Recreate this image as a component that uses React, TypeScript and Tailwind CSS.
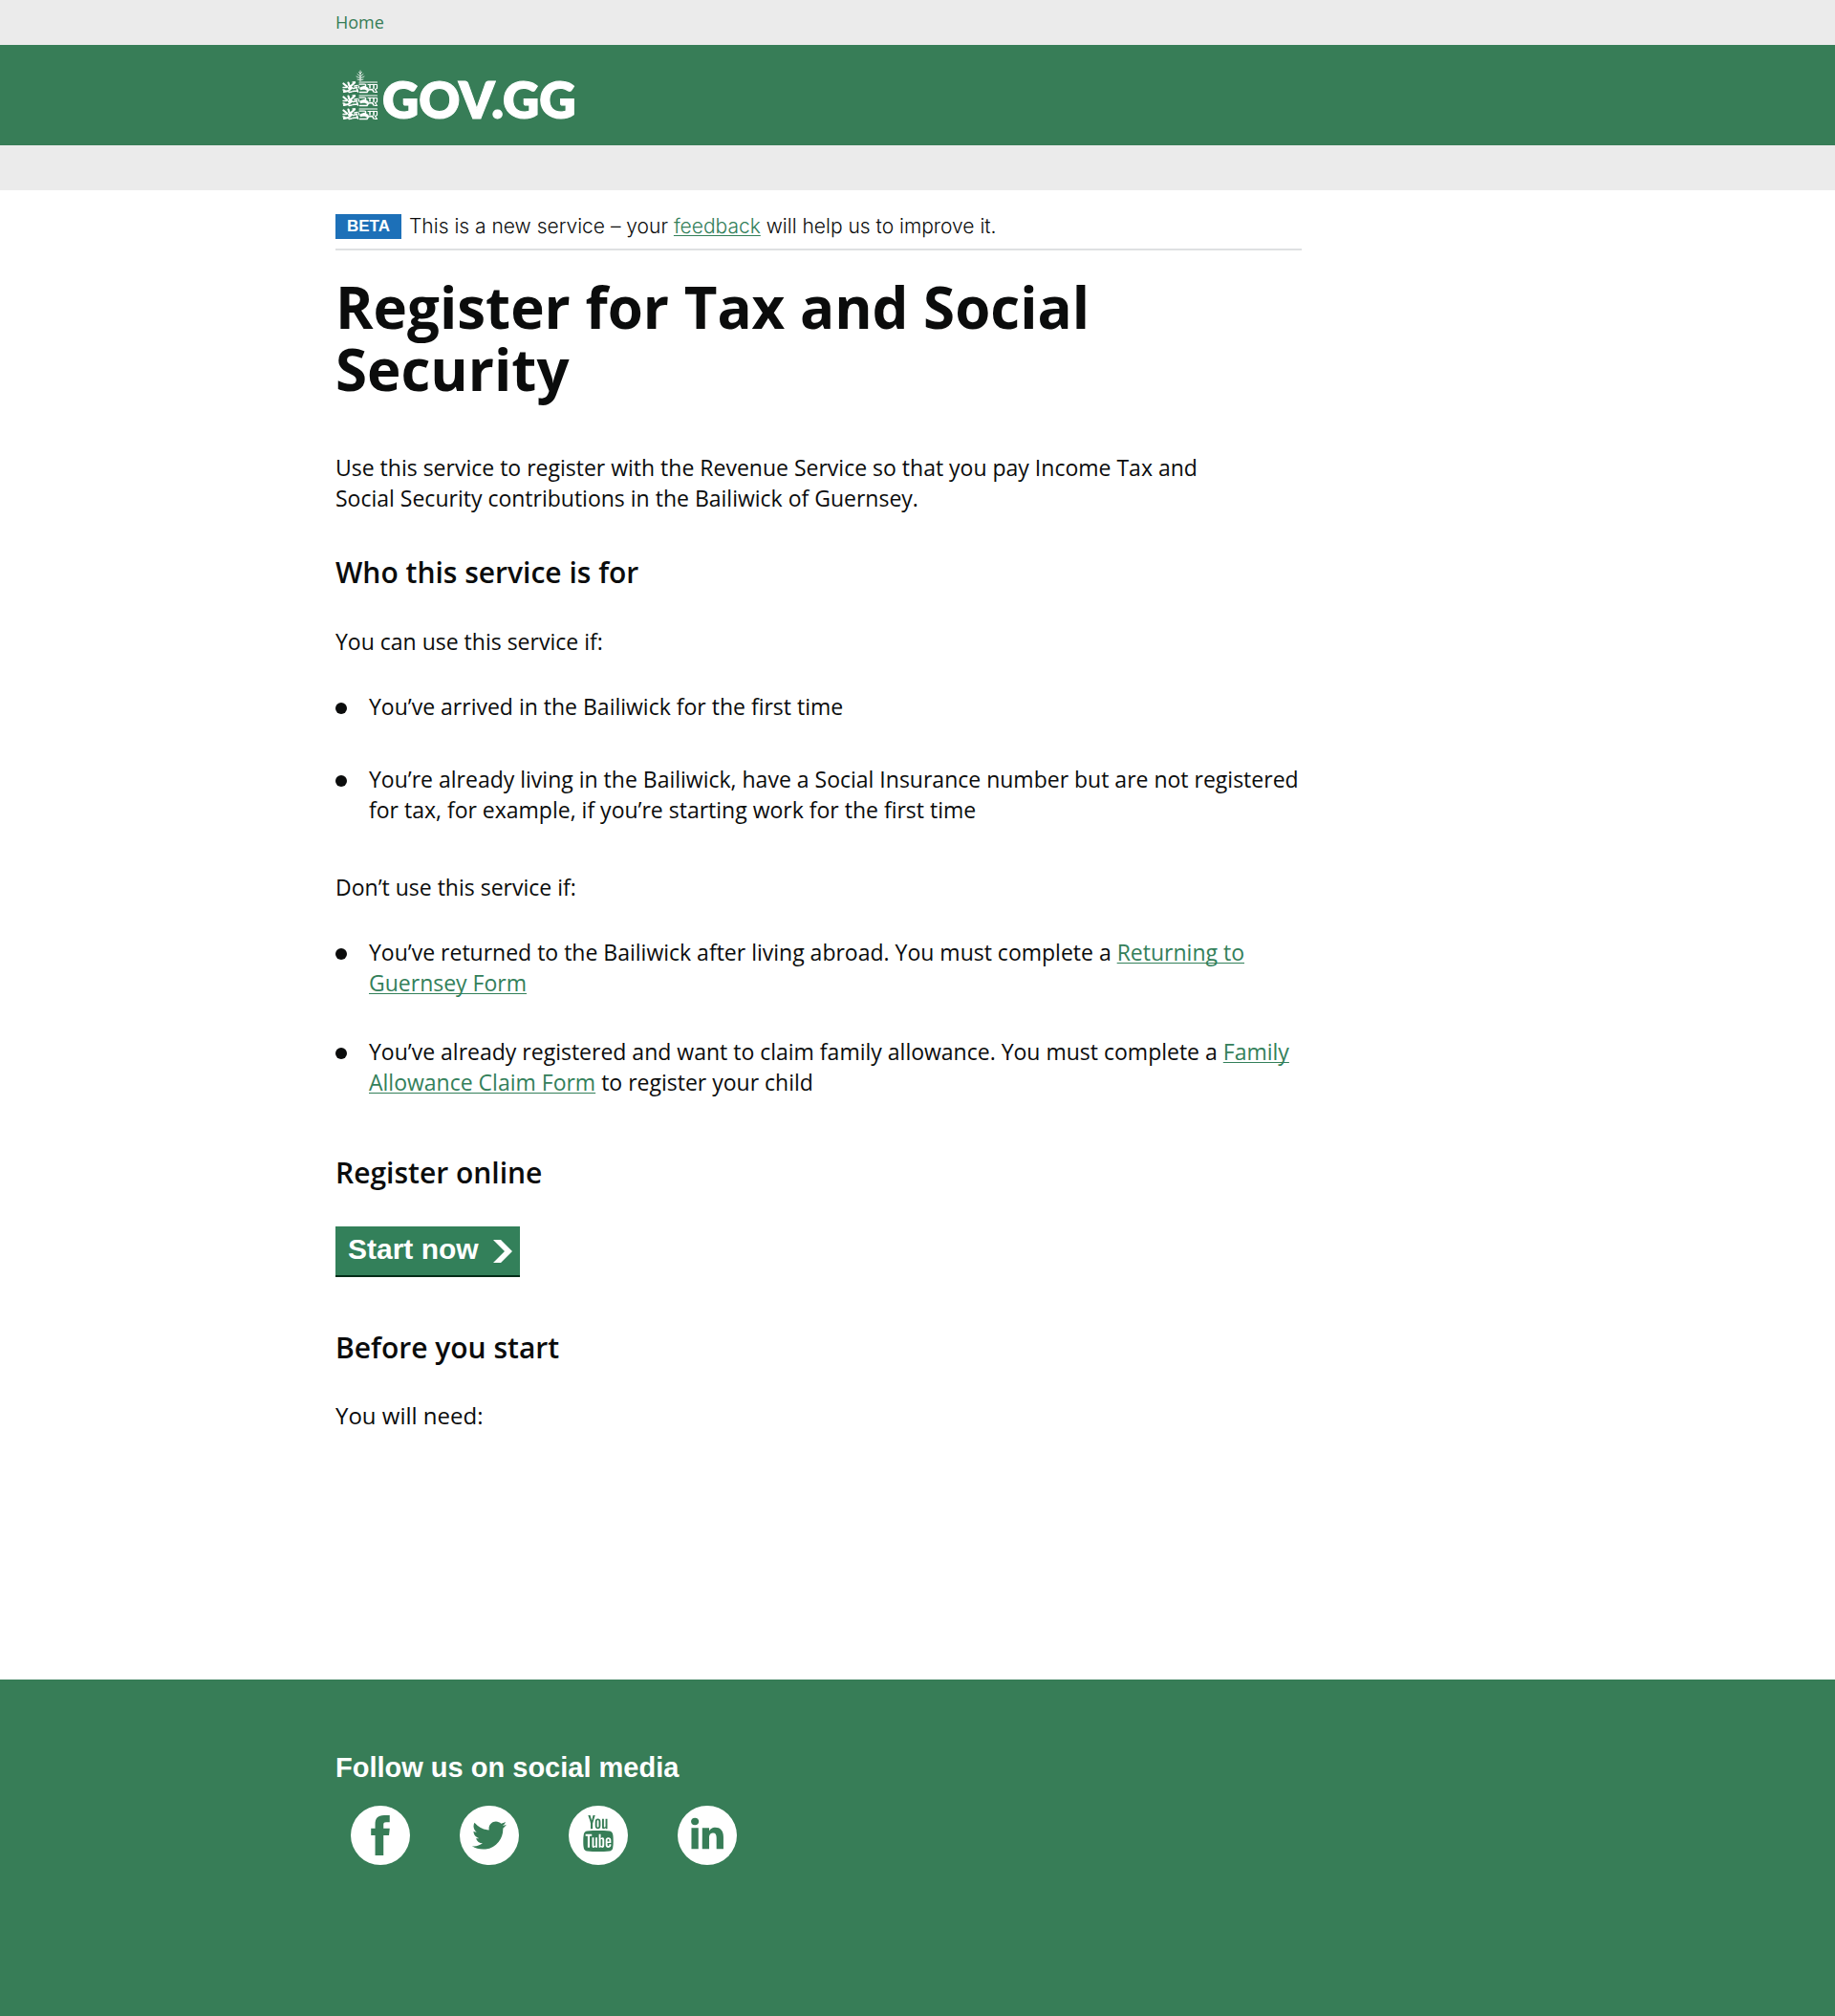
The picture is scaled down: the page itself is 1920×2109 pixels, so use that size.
import React from "react";
import { FaTwitter } from "react-icons/fa";
import { TfiFacebook, TfiLinkedin, TfiYoutube } from "react-icons/tfi";

function Wrap({ children }: { children?: React.ReactNode }) {
  return <div className="mx-auto w-full max-w-[1218px]">{children}</div>;
}

function Lion({ y }: { y: number }) {
  return (
    <g transform={`translate(0 ${y})`} fill="none" stroke="#fff" strokeLinecap="round" strokeLinejoin="round">
      <path strokeWidth="2.2" d="M1.500 2.500l3.500 3M6.500 1.500l1 3.500M7 7l6-5.500M2 11l4.500-1 3.500-3" />
      <path strokeWidth="1.300" d="M1 6.500h4M1 9l2 .5M7 11.500l3-.5M11 1l2.500 0" />
      <path strokeWidth="1.600" d="M11.500 7.500l4-1M11 10.500l4.500-.5M13 5l3-.5M15.500 8l1 3" />
      <path strokeWidth="1.200" d="M18 1h18.500M18 3.200h5.500M27 3.500h9M36.500 3.500v4l-2 1 2 3h-2.500M17.500 5v2" />
      <path strokeWidth="3.400" d="M20 7.500l3-1 3 1.500" />
      <path strokeWidth="1.500" d="M18.500 11.500h7.500l1.500-2.500 4-.5 1.500 2.500M24.500 3.500v2M29 3.500v3.500M33 3.500v4" />
    </g>
  );
}

function Crest() {
  return (
    <svg viewBox="0 0 38 53" className="h-[53px] w-[38px]" aria-hidden="true">
      <g stroke="#fff" strokeOpacity="0.8" strokeWidth="1" strokeLinecap="round" fill="none">
        <path d="M19 1v10M19 4l-1.500-1.500M19 4l1.500-1.500M19 7l-3-2.500M19 7l3-2.500M19 9l-4-2M19 9l4-2M19 11l-3-1M19 11l3-1" />
      </g>
      <Lion y={12} />
      <Lion y={26} />
      <Lion y={40} />
    </svg>
  );
}

function Social({ label, children }: { label: string; children: React.ReactNode }) {
  return (
    <a
      href="#"
      aria-label={label}
      className="flex h-[62px] w-[62px] items-center justify-center rounded-full bg-white text-[#377d57]"
    >
      {children}
    </a>
  );
}

function Bullet({ children }: { children: React.ReactNode }) {
  return (
    <li className="flex gap-[23px]">
      <span className="mt-3 h-3 w-3 shrink-0 rounded-full bg-[#0b0c0c]" />
      <span>{children}</span>
    </li>
  );
}

function Link({ children }: { children: React.ReactNode }) {
  return (
    <a href="#" className="text-[#33805a] underline decoration-1 underline-offset-2 [text-decoration-skip-ink:none]">
      {children}
    </a>
  );
}

export default function App() {
  return (
    <div className="bg-white font-['Open_Sans',sans-serif] text-[23px] leading-8 text-[#0b0c0c]">
      <nav className="bg-[#ebebeb]">
        <Wrap>
          <a href="#" className="block h-[47px] text-lg leading-[47px] text-[#377d57]">
            Home
          </a>
        </Wrap>
      </nav>
      <header className="bg-[#377d57]">
        <Wrap>
          <a href="#" aria-label="GOV.GG" className="flex h-[105px] items-center gap-1 pl-[7px] text-white">
            <Crest />
            <span className="pt-2 font-['Lato',sans-serif] text-[53px] leading-[52px] font-extrabold [-webkit-text-stroke:1px_white]">
              GOV.GG
            </span>
          </a>
        </Wrap>
      </header>
      <div className="h-[47px] bg-[#ebebeb]" />

      <main>
        <Wrap>
          <div className="max-w-[1011px] pt-[25px] pb-[260px]">
            <div className="flex items-center gap-2 border-b-2 border-[#dee0e2] pb-[10px]">
              <strong className="bg-[#1d70b8] px-3 font-['Liberation_Sans',sans-serif] text-[17px] leading-[26px] font-bold text-white">
                BETA
              </strong>
              <span className="font-['Inter',sans-serif] text-[21px] leading-[26px] font-light">
                This is a new service – your <Link>feedback</Link> will help us to improve it.
              </span>
            </div>
            <h1 className="mt-[27px] text-[60px] leading-[65px] font-bold">Register for Tax and Social Security</h1>
            <p className="mt-[54px] max-w-[940px]">
              Use this service to register with the Revenue Service so that you pay Income Tax and Social Security
              contributions in the Bailiwick of Guernsey.
            </p>
            <h2 className="mt-[42px] text-[30px] leading-10 font-semibold">Who this service is for</h2>
            <p className="mt-9">You can use this service if:</p>
            <ul className="mt-9 flex flex-col gap-11">
              <Bullet>You’ve arrived in the Bailiwick for the first time</Bullet>
              <Bullet>
                You’re already living in the Bailiwick, have a Social Insurance number but are not registered for tax,
                for example, if you’re starting work for the first time
              </Bullet>
            </ul>
            <p className="mt-[49px]">Don’t use this service if:</p>
            <ul className="mt-9 flex flex-col gap-10">
              <Bullet>
                You’ve returned to the Bailiwick after living abroad. You must complete a{" "}
                <Link>Returning to Guernsey Form</Link>
              </Bullet>
              <Bullet>
                You’ve already registered and want to claim family allowance. You must complete a{" "}
                <Link>Family Allowance Claim Form</Link> to register your child
              </Bullet>
            </ul>
            <h2 className="mt-[59px] text-[30px] leading-10 font-semibold">Register online</h2>
            <button
              type="button"
              className="mt-9 flex h-[53px] items-center gap-[15px] border-b-2 border-[#002d18] bg-[#33805a] pr-2 pl-[13px] font-['Liberation_Sans',sans-serif] text-[30px] leading-[46px] font-bold text-white"
            >
              <span className="pb-1">Start now</span>
              <svg viewBox="0 0 20 24" className="h-6 w-5" fill="#fff" aria-hidden="true">
                <path d="M0 0h8l12 12L8 24H0l12-12z" />
              </svg>
            </button>
            <h2 className="mt-[54px] text-[30px] leading-10 font-semibold">Before you start</h2>
            <p className="mt-[35px] text-2xl leading-8">You will need:</p>
          </div>
        </Wrap>
      </main>

      <footer className="bg-[#377d57]">
        <Wrap>
          <div className="pt-[76px] pb-[158px]">
            <h2 className="font-['Liberation_Sans',sans-serif] text-[29px] leading-8 font-bold text-white">
              Follow us on social media
            </h2>
            <div className="mt-6 flex gap-[52px] pl-4">
              <Social label="Facebook">
                <TfiFacebook className="h-[42px] w-[42px]" />
              </Social>
              <Social label="Twitter">
                <FaTwitter className="h-9 w-9" />
              </Social>
              <Social label="YouTube">
                <TfiYoutube className="mb-1 h-[38px] w-[38px]" />
              </Social>
              <Social label="LinkedIn">
                <TfiLinkedin className="mb-1 h-9 w-9" />
              </Social>
            </div>
          </div>
        </Wrap>
      </footer>
    </div>
  );
}
